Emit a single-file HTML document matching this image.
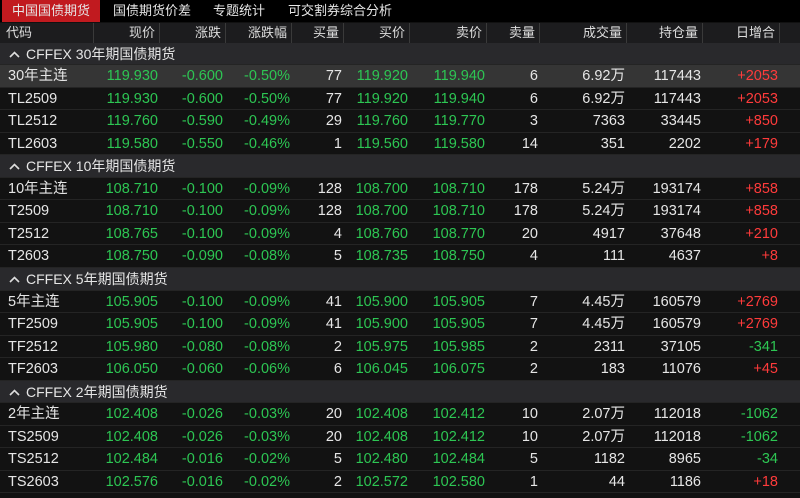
<!DOCTYPE html><html><head><meta charset="utf-8"><style>
*{margin:0;padding:0;box-sizing:border-box}
body{width:800px;height:498px;background:#111;overflow:hidden;font-family:"Liberation Sans","Noto Sans CJK SC",sans-serif;color:#e6e6e6}
.tabs{height:22px;background:#000;position:relative;font-size:13px}
.tabs span{position:absolute;top:0;height:22px;line-height:22px}
.hd{position:absolute;top:23px;left:0;width:800px;height:20px;background:#1c1c1e;font-size:13px;color:#ddd}
.hd div{position:absolute;top:0;height:20px;line-height:20px;border-right:1px solid #3a3a3a;text-align:right;padding-right:4px}
.rows{position:absolute;top:42.5px;left:0;width:800px}
.r{height:22.56px;position:relative;border-bottom:1px solid #242424;background:#121212;font-size:14.5px}
.g{background:#29292c;font-size:14px}
.sel{background:#353535}
.r span{position:absolute;top:0;line-height:22px;text-align:right}
.c0{left:8px;text-align:left!important}
.g svg{position:absolute;left:9px;top:8px}
.gn{color:#2dc653}.rd{color:#ff3b3b}
</style></head><body>
<div class="tabs">
<span style="left:2px;width:98px;background:#c11a1f;text-align:center">中国国债期货</span>
<span style="left:113px">国债期货价差</span>
<span style="left:213px">专题统计</span>
<span style="left:288px">可交割券综合分析</span>
</div>
<div class="hd">
<div style="left:2px;width:92px;text-align:left;padding-left:4px">代码</div>
<div style="left:94px;width:66px">现价</div>
<div style="left:160px;width:66px">涨跌</div>
<div style="left:226px;width:66px">涨跌幅</div>
<div style="left:292px;width:52px">买量</div>
<div style="left:344px;width:66px">买价</div>
<div style="left:410px;width:77px">卖价</div>
<div style="left:487px;width:53px">卖量</div>
<div style="left:540px;width:87px">成交量</div>
<div style="left:627px;width:76px">持仓量</div>
<div style="left:703px;width:77px">日增合</div>
</div>
<div class="rows" id="R"></div>
<script>
var R=[["g","CFFEX 30年期国债期货"],
["30年主连","119.930","-0.600","-0.50%","77","119.920","119.940","6","6.92万","117443","+2053"],
["TL2509","119.930","-0.600","-0.50%","77","119.920","119.940","6","6.92万","117443","+2053"],
["TL2512","119.760","-0.590","-0.49%","29","119.760","119.770","3","7363","33445","+850"],
["TL2603","119.580","-0.550","-0.46%","1","119.560","119.580","14","351","2202","+179"],
["g","CFFEX 10年期国债期货"],
["10年主连","108.710","-0.100","-0.09%","128","108.700","108.710","178","5.24万","193174","+858"],
["T2509","108.710","-0.100","-0.09%","128","108.700","108.710","178","5.24万","193174","+858"],
["T2512","108.765","-0.100","-0.09%","4","108.760","108.770","20","4917","37648","+210"],
["T2603","108.750","-0.090","-0.08%","5","108.735","108.750","4","111","4637","+8"],
["g","CFFEX 5年期国债期货"],
["5年主连","105.905","-0.100","-0.09%","41","105.900","105.905","7","4.45万","160579","+2769"],
["TF2509","105.905","-0.100","-0.09%","41","105.900","105.905","7","4.45万","160579","+2769"],
["TF2512","105.980","-0.080","-0.08%","2","105.975","105.985","2","2311","37105","-341"],
["TF2603","106.050","-0.060","-0.06%","6","106.045","106.075","2","183","11076","+45"],
["g","CFFEX 2年期国债期货"],
["2年主连","102.408","-0.026","-0.03%","20","102.408","102.412","10","2.07万","112018","-1062"],
["TS2509","102.408","-0.026","-0.03%","20","102.408","102.412","10","2.07万","112018","-1062"],
["TS2512","102.484","-0.016","-0.02%","5","102.480","102.484","5","1182","8965","-34"],
["TS2603","102.576","-0.016","-0.02%","2","102.572","102.580","1","44","1186","+18"]];
var rt=[158,223,290,342,408,485,538,625,701,778];
var h="";
R.forEach(function(r,i){
if(r[0]=="g"){h+='<div class="r g"><svg width="11" height="7" viewBox="0 0 11 7"><path d="M1 6 L5.5 1.5 L10 6" fill="none" stroke="#ddd" stroke-width="1.6"/></svg><span style="left:26px;text-align:left">'+r[1]+'</span></div>';return;}
h+='<div class="r'+(i==1?' sel':'')+'"><span class="c0">'+r[0]+'</span>';
for(var k=1;k<11;k++){var c="";
if(k<=3||k==5||k==6)c="gn";
if(k==10)c=r[10][0]=="+"?"rd":"gn";
h+='<span class="'+c+'" style="right:'+(800-rt[k-1])+'px">'+r[k]+'</span>';}
h+='</div>';});
document.getElementById("R").innerHTML=h;
</script>
</body></html>
